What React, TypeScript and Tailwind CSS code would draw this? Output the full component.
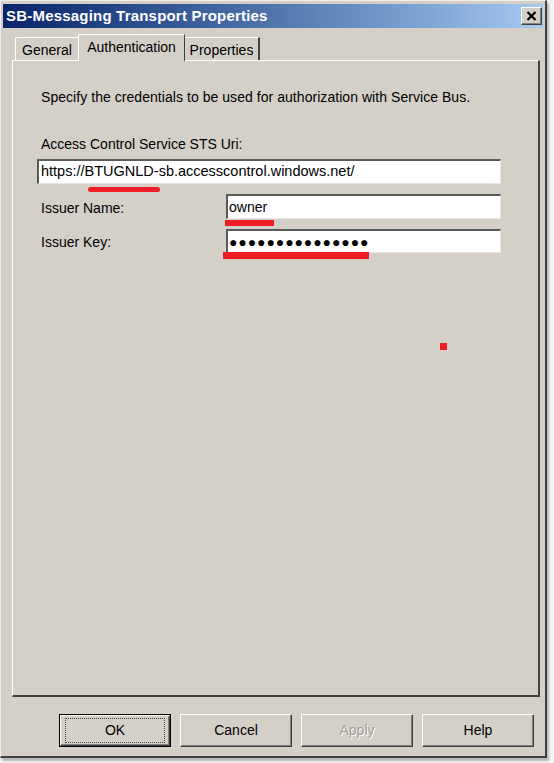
import React from "react";

const raised = "border-t border-l border-t-white border-l-white border-r border-b border-r-[#404040] border-b-[#404040] shadow-[inset_-1px_-1px_0_#808080]";
const sunken = "border-t-2 border-l-2 border-t-[#5a5a5a] border-l-[#5a5a5a] border-b border-r border-b-[#e8e6e0] border-r-[#e8e6e0] bg-white";

function Btn({ label, disabled, def }: { label: string; disabled?: boolean; def?: boolean }) {
  return (
    <div className={`w-[112px] h-[33px] bg-[#d4d0c8] ${def ? "border border-black" : ""}`}>
      <div className={`w-full h-full flex items-center justify-center ${raised}`}>
        {def ? (
          <div className="w-[100px] h-[25px] border border-dotted border-[#444] flex items-center justify-center">{label}</div>
        ) : (
          <span className={disabled ? "text-[#a09d96] [text-shadow:1px_1px_0_#fff]" : ""}>{label}</span>
        )}
      </div>
    </div>
  );
}

export default function App() {
  return (
    <div className="w-[554px] h-[763px] bg-[#f4f4f4] relative text-[14px] text-black" style={{ fontFamily: '"Liberation Sans", Arial, sans-serif' }}>
      {/* window */}
      <div className="w-[547px] h-[758px] bg-[#d4d0c8] border-t border-l border-t-[#f0eee8] border-l-[#f0eee8] border-r-2 border-b-2 border-r-[#404040] border-b-[#404040] shadow-[2px_3px_2px_rgba(0,0,0,0.25)] p-[2px] flex flex-col">
        <div className="h-[24px] mt-[1px] flex items-center justify-between pl-[3px] pr-[1px] bg-gradient-to-r from-[#0a246a] to-[#a6caf0]">
          <span className="text-white font-bold text-[15px] tracking-[0.2px]">SB-Messaging Transport Properties</span>
          <div className={`w-[21px] h-[18px] bg-[#d4d0c8] flex items-center justify-center ${raised}`}>
            <svg width="11" height="10" viewBox="0 0 11 10">
              <path d="M1.5 1 L9.5 9 M9.5 1 L1.5 9" stroke="#000" strokeWidth="2.2" />
            </svg>
          </div>
        </div>

        <div className="pl-[9px] pr-[3px] pt-[6px] flex flex-col">
          {/* tabs */}
          <div className="flex items-end h-[26px] pl-[3px] relative z-10">
            <div className="h-[23px] w-[63px] flex items-center justify-center border-t border-l border-t-white border-l-white rounded-tl-[2px] pt-[3px]">General</div>
            <div className="h-[27px] w-[107px] -mb-[1px] bg-[#d4d0c8] flex items-center justify-center border-t border-l border-r border-t-white border-l-white border-r-[#404040] rounded-tl-[2px] pb-[2px]">Authentication</div>
            <div className="h-[23px] w-[75px] flex items-center justify-center border-t border-r-2 border-t-white border-r-[#404040] pt-[3px]">Properties</div>
          </div>
          {/* panel */}
          <div className="h-[637px] relative border-t border-l border-t-white border-l-white border-r-2 border-b-2 border-r-[#404040] border-b-[#404040] pl-[24px] pr-[37px] pt-[28px]">
            <p className="pl-[4px] h-[16px] leading-[16px] tracking-[0.05px]">Specify the credentials to be used for authorization with Service Bus.</p>
            <p className="pl-[4px] mt-[31px] h-[16px] leading-[16px]">Access Control Service STS Uri:</p>
            <div className={`mt-[7px] h-[25px] flex items-center pl-[2px] text-[14.5px] ${sunken}`}>https://BTUGNLD-sb.accesscontrol.windows.net/</div>
            <div className="mt-[10px] flex items-center">
              <span className="pl-[4px] w-[189px] pt-[4px]">Issuer Name:</span>
              <div className={`flex-1 h-[25px] flex items-center pl-[1px] ${sunken}`}>owner</div>
            </div>
            <div className="mt-[10px] flex items-center">
              <span className="pl-[4px] w-[189px] pt-[2px]">Issuer Key:</span>
              <div className={`flex-1 h-[24px] flex items-center pl-[1px] text-[14px] tracking-[0.9px] pt-[1px] ${sunken}`}>●●●●●●●●●●●●●●●</div>
            </div>

            {/* red annotation marks */}
            <div className="absolute left-[75px] top-[126px] w-[72px] h-[5px] bg-[#ee1c24] rounded-full" />
            <div className="absolute left-[212px] top-[159px] w-[49px] h-[6px] bg-[#ee1c24]" />
            <div className="absolute left-[210px] top-[191px] w-[146px] h-[7px] bg-[#ee1c24]" />
            <div className="absolute left-[427px] top-[282px] w-[7px] h-[7px] bg-[#ee1c24]" />
          </div>

          {/* buttons */}
          <div className="flex justify-end gap-[9px] mt-[17px] pr-[6px]">
            <Btn label="OK" def />
            <Btn label="Cancel" />
            <Btn label="Apply" disabled />
            <Btn label="Help" />
          </div>
        </div>
      </div>
    </div>
  );
}
